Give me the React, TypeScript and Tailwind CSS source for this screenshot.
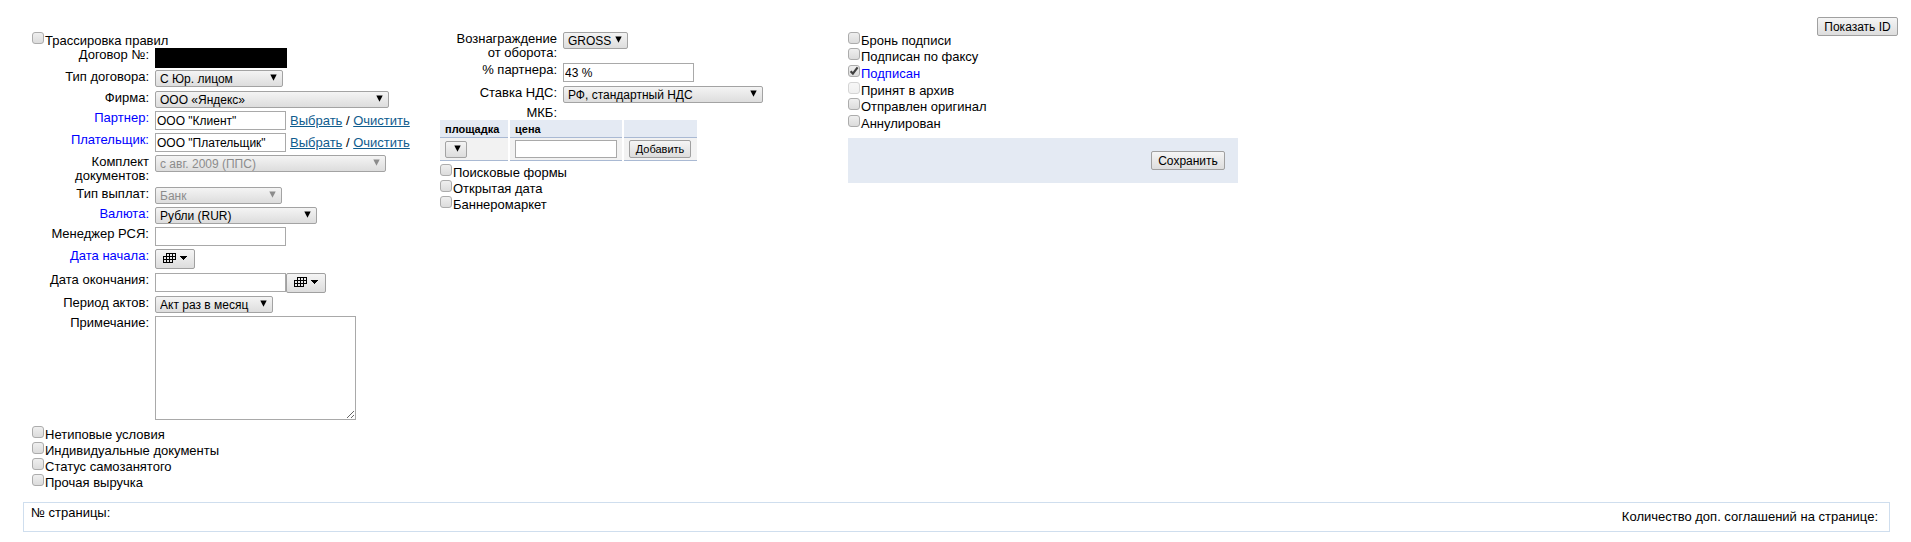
import { useId, useState } from 'react';
import type { ReactNode } from 'react';

function Row({ label, htmlFor, height, required, children }: { label: string; htmlFor?: string; height: string; required?: boolean; children?: ReactNode }) {
  return (
    <div className={`flex items-start gap-1.5 ${height}`}>
      <label htmlFor={htmlFor} className={`w-[117px] shrink-0 pt-px text-right leading-[14px] ${required ? 'text-[#0000ff]' : ''}`}>
        {label}
      </label>
      <div className="flex items-start pt-px">{children}</div>
    </div>
  );
}

function Select({ id, width, options, disabled, label }: { id?: string; width: string; options: string[]; disabled?: boolean; label?: string }) {
  return (
    <span className={`relative block ${width} ${disabled ? 'text-[#8c8c8c]' : 'text-black'}`}>
      <select
        id={id}
        aria-label={label}
        disabled={disabled}
        className="block h-[17px] w-full appearance-none rounded-xs border border-[#a3a3a3] bg-linear-to-b from-[#f4f4f4] to-[#dddddd] pl-1 pt-px text-xs leading-[14px] opacity-100"
      >
        {options.map((o) => (
          <option key={o}>{o}</option>
        ))}
      </select>
      <svg className="pointer-events-none absolute right-1.5 top-1 h-[7px] w-[7px]" viewBox="0 0 7 7" fill="currentColor" aria-hidden="true">
        <path d="M0.3 0.5H6.7L3.5 6.8Z" />
      </svg>
    </span>
  );
}

function TextBox({ id, value = '', label, width = 'w-[131px]', height = 'h-[19px]' }: { id?: string; value?: string; label?: string; width?: string; height?: string }) {
  return (
    <input id={id} type="text" aria-label={label} defaultValue={value} className={`block border border-[#a9a9a9] bg-white px-px pt-px text-xs ${width} ${height}`} />
  );
}

function Check({ label, height = 'h-4', initial = false, disabled, highlight }: { label: string; height?: string; initial?: boolean; disabled?: boolean; highlight?: boolean }) {
  const id = useId();
  const [on, setOn] = useState(initial);
  return (
    <div className={`flex items-start ${height}`}>
      <span className="relative mr-px mt-px block">
        <input
          id={id}
          type="checkbox"
          checked={on}
          disabled={disabled}
          onChange={(e) => setOn(e.target.checked)}
          className="block size-3 appearance-none rounded-[3px] border border-[#acacac] bg-linear-to-b from-[#efefef] to-[#dcdcdc] disabled:border-[#d5d5d5] disabled:from-[#f7f7f7] disabled:to-[#f0f0f0]"
        />
        {on && (
          <svg className="pointer-events-none absolute left-0 top-0 size-3" viewBox="0 0 12 12" fill="none" stroke="#404040" strokeWidth="2.2" aria-hidden="true">
            <path d="M2.6 6.2L4.9 8.6L9.6 2.4" />
          </svg>
        )}
      </span>
      <label htmlFor={id} className={`pt-[3px] leading-[14px] ${highlight ? 'text-[#0000ff]' : ''}`}>
        {label}
      </label>
    </div>
  );
}

const buttonStyle = 'border border-[#a0a0a0] rounded-xs bg-linear-to-b from-[#f5f5f5] to-[#dddddd]';

function CalendarButton({ label }: { label: string }) {
  return (
    <button type="button" aria-label={label} className={`${buttonStyle} flex h-5 w-10 items-center gap-1 pb-0.5 pl-[7px]`}>
      <svg className="shrink-0" width="13" height="10" viewBox="0 0 13 10" fill="none" stroke="#000" aria-hidden="true" shapeRendering="crispEdges">
        <path d="M3 0.5H13M0 3.5H13M0 6.5H13M0 9.5H10M0.5 3V10M3.5 0V10M6.5 0V10M9.5 0V10M12.5 0V7" />
      </svg>
      <svg className="shrink-0" width="7" height="4" viewBox="0 0 7 4" aria-hidden="true" shapeRendering="crispEdges">
        <path d="M0 0H7V1H6V2H5V3H4V4H3V3H2V2H1V1H0Z" />
      </svg>
    </button>
  );
}

function PartyLinks() {
  return (
    <span className="ml-1 pt-[3px] leading-[14px]">
      <a href="#select" className="text-[#0f5c8e] underline">Выбрать</a> / <a href="#clear" className="text-[#0f5c8e] underline">Очистить</a>
    </span>
  );
}

export default function App() {
  return (
    <main className="bg-white font-['Liberation_Sans',Arial,sans-serif] text-[13px] text-black">
      <header className="flex h-[31px] justify-end pr-[13px] pt-[17px]">
        <button type="button" className={`${buttonStyle} h-[19px] w-[81px] shrink-0 text-xs`}>Показать ID</button>
      </header>

      <form className="flex items-start pl-8" onSubmit={(e) => e.preventDefault()}>
        <section className="w-[408px] shrink-0">
          <Check label="Трассировка правил" height="h-[17px]" />
          <div className="flex h-[21px] items-start gap-1.5">
            <span className="w-[117px] text-right leading-[14px]">Договор №:</span>
            <span className="block h-5 w-[132px] bg-black" />
          </div>
          <Row label="Тип договора:" htmlFor="kind" height="h-[21px]">
            <Select id="kind" width="w-32" options={['С Юр. лицом']} />
          </Row>
          <Row label="Фирма:" htmlFor="firm" height="h-5">
            <Select id="firm" width="w-[234px]" options={['ООО «Яндекс»']} />
          </Row>
          <Row label="Партнер:" htmlFor="partner" height="h-[22px]" required>
            <TextBox id="partner" value={'ООО "Клиент"'} />
            <PartyLinks />
          </Row>
          <Row label="Плательщик:" htmlFor="payer" height="h-[22px]" required>
            <TextBox id="payer" value={'ООО "Плательщик"'} />
            <PartyLinks />
          </Row>
          <Row label="Комплект документов:" htmlFor="docs" height="h-8">
            <Select id="docs" width="w-[231px]" options={['с авг. 2009 (ППС)']} disabled />
          </Row>
          <Row label="Тип выплат:" htmlFor="payout" height="h-5">
            <Select id="payout" width="w-[127px]" options={['Банк']} disabled />
          </Row>
          <Row label="Валюта:" htmlFor="currency" height="h-5" required>
            <Select id="currency" width="w-[162px]" options={['Рубли (RUR)']} />
          </Row>
          <Row label="Менеджер РСЯ:" htmlFor="manager" height="h-[22px]">
            <TextBox id="manager" />
          </Row>
          <Row label="Дата начала:" height="h-6" required>
            <CalendarButton label="Дата начала" />
          </Row>
          <Row label="Дата окончания:" htmlFor="end" height="h-[23px]">
            <TextBox id="end" />
            <CalendarButton label="Дата окончания" />
          </Row>
          <Row label="Период актов:" htmlFor="period" height="h-5">
            <Select id="period" width="w-[118px]" options={['Акт раз в месяц']} />
          </Row>
          <Row label="Примечание:" htmlFor="note" height="pb-[5px]">
            <textarea id="note" className="block h-[104px] w-[201px] border border-[#a9a9a9] bg-white p-0.5 text-xs" />
          </Row>
          <Check label="Нетиповые условия" />
          <Check label="Индивидуальные документы" />
          <Check label="Статус самозанятого" />
          <Check label="Прочая выручка" />
        </section>

        <section className="w-[408px] shrink-0">
          <Row label="Вознаграждение от оборота:" htmlFor="reward" height="h-[31px]">
            <Select id="reward" width="w-[65px]" options={['GROSS']} />
          </Row>
          <Row label="% партнера:" htmlFor="percent" height="h-[23px]">
            <TextBox id="percent" value="43 %" />
          </Row>
          <Row label="Ставка НДС:" htmlFor="vat" height="h-5">
            <Select id="vat" width="w-[200px]" options={['РФ, стандартный НДС']} />
          </Row>
          <Row label="МКБ:" height="h-[15px]" />
          <table className="-ml-0.5 mb-0.5 border-separate border-spacing-x-0.5 border-spacing-y-0 text-left text-[11px]">
            <thead>
              <tr className="h-[18px]">
                <th className="w-[68px] border-b border-[#a9b9d3] bg-[#e4eaf3] px-[5px] py-0 leading-4">площадка</th>
                <th className="w-28 border-b border-[#a9b9d3] bg-[#e4eaf3] px-[5px] py-0 leading-4">цена</th>
                <th className="w-[73px] border-b border-[#a9b9d3] bg-[#e4eaf3] p-0" />
              </tr>
            </thead>
            <tbody>
              <tr className="h-[23px]">
                <td className="border-b border-[#a9b9d3] bg-[#f2f2f2] px-[5px] py-0">
                  <Select width="w-[22px]" options={['']} label="площадка" />
                </td>
                <td className="border-b border-[#a9b9d3] bg-[#f2f2f2] px-[5px] py-0">
                  <TextBox label="цена" width="w-[102px]" height="h-[18px]" />
                </td>
                <td className="border-b border-[#a9b9d3] bg-[#f2f2f2] px-[5px] py-0">
                  <button type="button" className={`${buttonStyle} block h-[18px] w-[62px] text-[11px]`}>Добавить</button>
                </td>
              </tr>
            </tbody>
          </table>
          <Check label="Поисковые формы" />
          <Check label="Открытая дата" />
          <Check label="Баннеромаркет" />
        </section>

        <section className="w-[390px]">
          <Check label="Бронь подписи" />
          <Check label="Подписан по факсу" height="h-[17px]" />
          <Check label="Подписан" height="h-[17px]" initial highlight />
          <Check label="Принят в архив" disabled />
          <Check label="Отправлен оригинал" height="h-[17px]" />
          <Check label="Аннулирован" height="h-[17px]" />
          <div className="mt-[7px] flex justify-end bg-[#e4eaf3] p-[13px]">
            <button type="submit" className={`${buttonStyle} h-[19px] w-[74px] text-xs`}>Сохранить</button>
          </div>
        </section>
      </form>

      <footer className="mb-2.5 ml-[23px] mr-[21px] mt-[13px] flex h-[30px] justify-between border border-[#cfdeee] pl-[7px] pr-[11px] leading-[14px]">
        <span className="pt-[3px]">№ страницы:</span>
        <span className="pt-[7px]">Количество доп. соглашений на странице:</span>
      </footer>
    </main>
  );
}
